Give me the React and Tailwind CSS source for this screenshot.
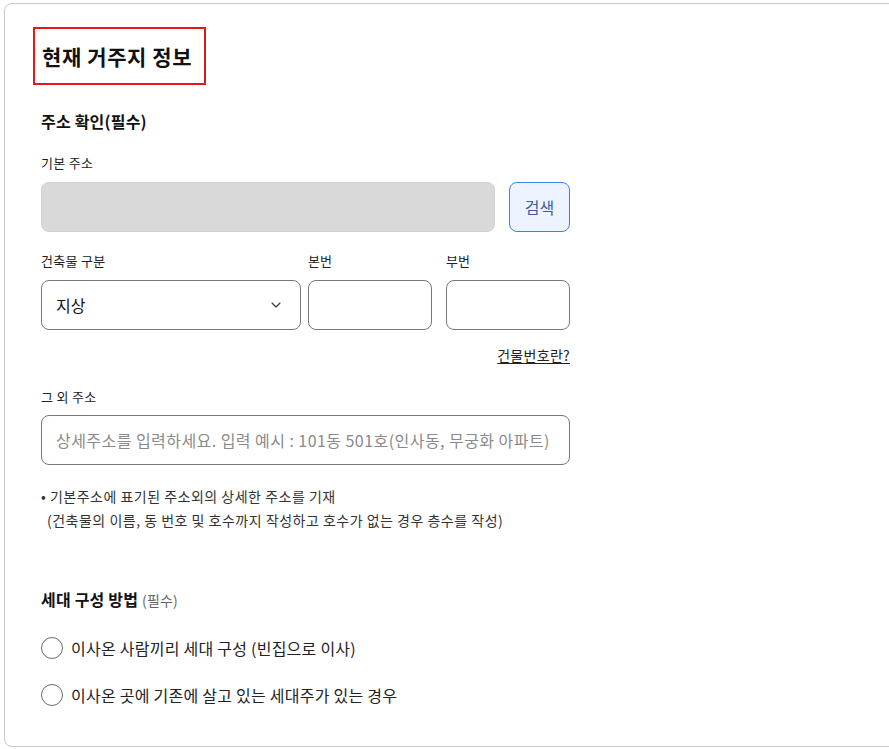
import { ChevronDown } from 'lucide-react';

const Radio = ({ label }) => (
  <label className="flex items-center h-[22px] gap-[8px]">
    <span className="w-[22px] h-[22px] rounded-full border border-[#6b6b6b] bg-white shrink-0" />
    <span className="text-[16px] leading-[22px] text-[#222] tracking-[0.25px]">{label}</span>
  </label>
);

export default function App() {
  return (
    <div className="w-[889px] h-[749px] overflow-hidden bg-white font-['Noto_Sans_CJK_KR',sans-serif]">
      <div className="ml-[4px] mt-[3px] w-[900px] h-[744px] border border-[#c8c8c8] rounded-[8px] bg-white">
        <div className="pl-[28px] pt-[23px]">
          <div className="inline-flex items-center w-[173px] h-[58px] px-[7px] border-2 border-[#e8151b]">
            <h1 className="text-[21px] leading-[28px] font-bold text-[#111] tracking-[0.6px] whitespace-nowrap">현재 거주지 정보</h1>
          </div>
        </div>

        <div className="pl-[36px] w-[565px]">
          <h2 className="mt-[25px] text-[16px] leading-[22px] font-bold text-[#111] tracking-[0.2px]">주소 확인(필수)</h2>

          <div className="mt-[22px] text-[13px] leading-[18px] text-[#222] tracking-[0.3px]">기본 주소</div>
          <div className="mt-[10px] flex gap-[14px]">
            <div className="flex-1 h-[50px] rounded-[8px] bg-[#d9d9d9] border border-[#cfcfcf]" />
            <button className="w-[61px] h-[50px] rounded-[8px] border border-[#3f7ff0] bg-[#eef4ff] text-[16px] text-[#3b5ba8]">
              검색
            </button>
          </div>

          <div className="mt-[20px] flex gap-[7px]">
            <div className="w-[260px]">
              <div className="text-[13px] leading-[18px] text-[#222] tracking-[0.3px]">건축물 구분</div>
              <div className="mt-[10px] h-[50px] rounded-[8px] border border-[#777] flex items-center justify-between pl-[14px] pr-[16px]">
                <span className="text-[16px] text-[#111]">지상</span>
                <ChevronDown className="w-[16px] h-[16px] text-[#333]" strokeWidth={1.6} />
              </div>
            </div>
            <div className="w-[124px]">
              <div className="text-[13px] leading-[18px] text-[#222]">본번</div>
              <div className="mt-[10px] h-[50px] rounded-[8px] border border-[#777]" />
            </div>
            <div className="w-[124px] ml-[7px]">
              <div className="text-[13px] leading-[18px] text-[#222]">부번</div>
              <div className="mt-[10px] h-[50px] rounded-[8px] border border-[#777]" />
            </div>
          </div>

          <div className="mt-[15px] flex justify-end">
            <a className="text-[14px] leading-[20px] text-[#222] underline underline-offset-2 tracking-[0.3px]">건물번호란?</a>
          </div>

          <div className="mt-[23px] text-[13px] leading-[18px] text-[#222] tracking-[0.3px]">그 외 주소</div>
          <div className="mt-[9px] h-[50px] rounded-[8px] border border-[#777] flex items-center pl-[14px]">
            <span className="text-[16px] text-[#8a8a8a] tracking-[0.45px] whitespace-nowrap">상세주소를 입력하세요. 입력 예시 : 101동 501호(인사동, 무궁화 아파트)</span>
          </div>

          <div className="mt-[19px] text-[14px] leading-[24px] text-[#333] tracking-[0.5px] whitespace-nowrap">
            <div>• 기본주소에 표기된 주소외의 상세한 주소를 기재</div>
            <div className="pl-[6px]">(건축물의 이름, 동 번호 및 호수까지 작성하고 호수가 없는 경우 층수를 작성)</div>
          </div>

          <h2 className="mt-[56px] text-[16px] leading-[22px] font-bold text-[#111] tracking-[0.2px]">
            세대 구성 방법 <span className="text-[14px] font-normal text-[#666]">(필수)</span>
          </h2>

          <div className="mt-[26px] flex flex-col gap-[25px]">
            <Radio label="이사온 사람끼리 세대 구성 (빈집으로 이사)" />
            <Radio label="이사온 곳에 기존에 살고 있는 세대주가 있는 경우" />
          </div>
        </div>
      </div>
    </div>
  );
}
